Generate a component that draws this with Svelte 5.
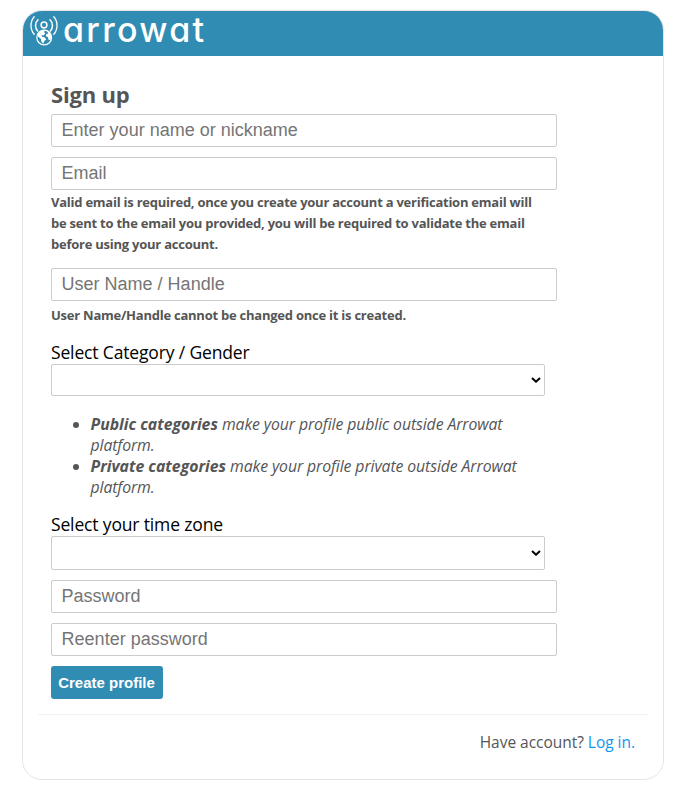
<script>
  let name = $state('');
  let email = $state('');
  let handle = $state('');
  let category = $state('');
  let timezone = $state('');
  let password = $state('');
  let confirm = $state('');
</script>

<main class="card">
  <header class="header">
    <svg class="icon" viewBox="0 0 28 32" width="28" height="32" aria-hidden="true">
      <g fill="none" stroke="#fff" stroke-linecap="round">
        <path d="M4.2 1.8C-.1 6.5-.1 14.5 4.2 19.2M23.8 1.8C28.1 6.5 28.1 14.5 23.8 19.2" stroke-width="1.3" />
        <path d="M8 4.8C4.8 8 4.8 13 7.6 16M20 4.8C23.2 8 23.2 13 20.4 16" stroke-width="1.5" />
        <circle cx="14" cy="10" r="2.9" stroke-width="1.5" />
        <circle cx="14.2" cy="22.5" r="7.4" stroke-width="1.2" />
      </g>
      <path fill="#fff" d="M8 19l3-3 4-.8-1 2 1.5 1-2 2.2-1.5-.5-.5 1.6 2.8.7 2 2-2.2 2-.7 2.6-2-2-.4-2.8L8 21.500zM17 15.800l3 2 1.400 4-1 3.600-2-1-.5-2.400-2-.8.400-2 2-.8z" />
    </svg>
    <span class="logo">arrowat</span>
  </header>

  <form class="form" onsubmit={(e) => e.preventDefault()}>
    <h1>Sign up</h1>
    <input type="text" placeholder="Enter your name or nickname" bind:value={name} />
    <input type="email" placeholder="Email" bind:value={email} />
    <p class="hint email-hint">
      Valid email is required, once you create your account a verification email will<br />
      be sent to the email you provided, you will be required to validate the email<br />
      before using your account.
    </p>
    <input type="text" placeholder="User Name / Handle" bind:value={handle} />
    <p class="hint handle-hint">User Name/Handle cannot be changed once it is created.</p>

    <label for="category">Select Category / Gender</label>
    <div class="select">
      <select id="category" bind:value={category}><option value=""></option></select>
      <svg class="chevron" viewBox="0 0 10 6" width="10" height="6"><path d="M1 1l4 3.700L9 1" /></svg>
    </div>
    <ul>
      <li><b>Public categories</b> make your profile public outside Arrowat<br />platform.</li>
      <li><b>Private categories</b> make your profile private outside Arrowat<br />platform.</li>
    </ul>

    <label for="timezone">Select your time zone</label>
    <div class="select tall">
      <select id="timezone" bind:value={timezone}><option value=""></option></select>
      <svg class="chevron" viewBox="0 0 10 6" width="10" height="6"><path d="M1 1l4 3.700L9 1" /></svg>
    </div>
    <input type="password" placeholder="Password" bind:value={password} />
    <input type="password" placeholder="Reenter password" bind:value={confirm} />
    <button type="submit">Create profile</button>
  </form>

  <footer class="footer">
    <p>Have account? <a href="#login">Log in.</a></p>
  </footer>
</main>

<style>
  :global(body) {
    background: #fff;
  }
  .card {
    box-sizing: border-box;
    width: 642px;
    height: 770px;
    margin: 10px 0 0 22px;
    border: 1px solid #e5e5e5;
    border-radius: 20px;
    background: #fff;
    color: #555;
    font-family: 'Open Sans', 'Noto Sans', sans-serif;
    white-space: nowrap;
  }
  .header {
    display: flex;
    align-items: flex-start;
    height: 45px;
    border-radius: 19px 19px 0 0;
    background: #318cb4;
  }
  .icon {
    margin: 4px 0 0 7px;
  }
  .logo {
    margin-left: 5px;
    color: #fff;
    font-family: Inter, sans-serif;
    font-size: 34px;
    font-weight: 500;
    line-height: 37px;
    letter-spacing: 2.3px;
    font-feature-settings: 'cv11' 1;
  }
  .form {
    display: flex;
    flex-direction: column;
    align-items: flex-start;
    padding: 23px 28px 0;
  }
  h1 {
    margin: 0 0 4px;
    font-size: 22px;
    line-height: 31px;
    letter-spacing: -0.2px;
  }
  input {
    box-sizing: border-box;
    width: 506px;
    height: 33px;
    margin: 0 0 10px;
    padding: 0 9.6px;
    border: 1px solid #ccc;
    border-radius: 2px;
    font-family: 'Liberation Sans', Arial, sans-serif;
    font-size: 18px;
    color: #333;
  }
  input::placeholder {
    color: #757575;
    opacity: 1;
  }
  .hint {
    font-size: 13px;
    font-weight: 700;
    line-height: 21px;
    letter-spacing: -0.24px;
  }
  .email-hint {
    margin: -8px 0 13px;
  }
  .handle-hint {
    margin: -6px 0 15px;
  }
  label {
    margin-bottom: 1px;
    color: #000;
    font-size: 17.5px;
    line-height: 22px;
    letter-spacing: -0.15px;
  }
  .select {
    position: relative;
    width: 494px;
    height: 32px;
  }
  .tall {
    height: 34px;
    margin-bottom: 10px;
  }
  select {
    display: block;
    width: 100%;
    height: 100%;
    appearance: none;
    background: #fff;
    border: 1px solid #ccc;
    border-radius: 2px;
  }
  .chevron {
    position: absolute;
    top: 50%;
    right: 4px;
    margin-top: -3px;
    fill: none;
    stroke: #000;
    stroke-width: 2;
    pointer-events: none;
  }
  ul {
    margin: 18px 0 15px;
    padding-left: 39.5px;
    font-size: 15.8px;
    font-style: italic;
    line-height: 21px;
    letter-spacing: -0.1px;
  }
  b {
    letter-spacing: 0;
  }
  button {
    width: 112px;
    height: 33px;
    padding: 0 1px 0 0;
    border: 0;
    border-radius: 3px;
    background: #318cb4;
    color: #fff;
    font-family: 'Liberation Sans', Arial, sans-serif;
    font-size: 15px;
    font-weight: 700;
  }
  .footer {
    margin: 15px 15px 0;
    padding-right: 13px;
    border-top: 1px solid #f2f2f2;
    text-align: right;
  }
  .footer p {
    margin: 15px 0 0;
    font-size: 15.5px;
    line-height: 24px;
    letter-spacing: -0.03px;
  }
  a {
    color: #1296f0;
    text-decoration: none;
  }
</style>
